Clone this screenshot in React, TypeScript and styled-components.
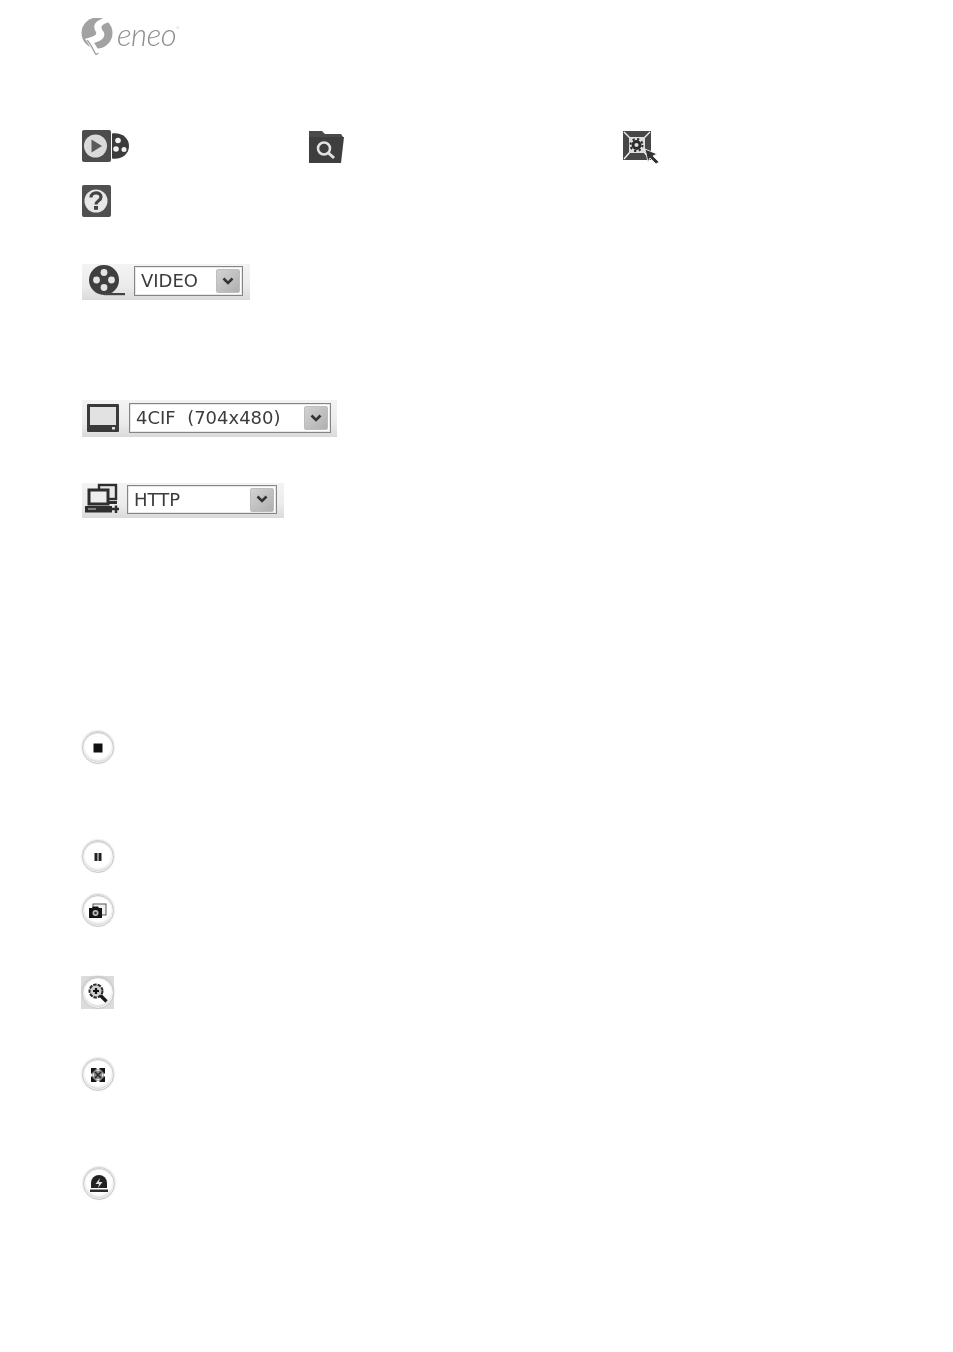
import React from "react";
import styled, { createGlobalStyle } from "styled-components";

const Global = createGlobalStyle`
  html, body { margin: 0; padding: 0; background: #fff; }
  body { font-family: "DejaVu Sans", sans-serif; }
`;

const Page = styled.div`
  width: 953px;
  height: 1352px;
  box-sizing: border-box;
  padding: 18px 0 0 81px;
  display: flex;
  flex-direction: column;
  overflow: hidden;
`;

const Logo = styled.div`
  display: flex;
  align-items: center;
  height: 38px;
  gap: 4px;
`;

const LogoWord = styled.span`
  font-family: "Lato", sans-serif;
  font-style: italic;
  font-weight: 300;
  font-size: 31px;
  line-height: 38px;
  letter-spacing: -0.4px;
  color: #8e8e8e;
  margin-top: -6px;
  filter: blur(0.3px);
`;

const Sup = styled.sup`
  font-size: 6px;
  line-height: 0;
  vertical-align: 15px;
`;

const TopRow = styled.div`
  display: grid;
  grid-template-columns: 228px 313px auto;
  margin-top: 74px;
  height: 34px;
  justify-content: start;
`;

const IconCell = styled.div`
  display: flex;
  align-items: flex-start;
`;

const HelpRow = styled.div`
  margin-top: 21px;
  height: 33px;
`;

const Bar = styled.div<{ $w: number; $h: number; $top: number; $gap: number; $pad: number }>`
  width: ${(p) => p.$w}px;
  height: ${(p) => p.$h}px;
  margin-top: ${(p) => p.$top}px;
  margin-left: 1px;
  box-sizing: border-box;
  padding-left: ${(p) => p.$pad}px;
  display: flex;
  align-items: flex-start;
  gap: ${(p) => p.$gap}px;
  background: linear-gradient(#f3f3f3 0%, #ececec 60%, #dadada 100%);
`;

const SelectBox = styled.div<{ $w: number; $h: number; $mt: number }>`
  width: ${(p) => p.$w}px;
  height: ${(p) => p.$h}px;
  margin-top: ${(p) => p.$mt}px;
  box-sizing: border-box;
  border: 1px solid #858585;
  box-shadow: inset 0 0 0 1px #e8e8e8;
  background: #fff;
  display: flex;
  align-items: center;
  justify-content: space-between;
  padding: 0 2px 0 6px;
  font-size: 18px;
  color: #3c3c3c;
  white-space: pre;
  filter: blur(0.45px);
`;

const SelectText = styled.span`
  margin-top: -1px;
`;

const Arrow = styled.div`
  width: 24px;
  height: 24px;
  background: linear-gradient(135deg, #d2d2d2, #b0b0b0);
  border: 1px solid #bdbdbd;
  box-sizing: border-box;
  border-radius: 2px;
  display: flex;
  align-items: center;
  justify-content: center;
`;

const RoundButton = styled.div<{ $top: number; $left?: number; $square?: boolean }>`
  width: 33px;
  height: 33px;
  margin-top: ${(p) => p.$top}px;
  margin-left: ${(p) => p.$left ?? 0}px;
  background: ${(p) => (p.$square ? "#dcdcdc" : "transparent")};
  display: flex;
  align-items: center;
  justify-content: center;
`;

const Ring = styled.div`
  width: 32px;
  height: 32px;
  box-sizing: border-box;
  border-radius: 50%;
  border: 1.500px solid #c8c8c8;
  box-shadow: 0 -1px 2px #c4c4c4, inset 0 0 0 1px #f4f4f4, inset 0 -2px 3px #cfcfcf;
  background: radial-gradient(circle at 50% 45%, #ffffff 60%, #e2e2e2 100%);
  display: flex;
  align-items: center;
  justify-content: center;
  filter: blur(0.35px);
`;

const Soft = styled.svg<{ $mt?: number }>`
  display: block;
  filter: blur(0.5px);
  flex: none;
  margin-top: ${(p) => p.$mt ?? 0}px;
`;

const Chevron = () => (
  <svg width="12" height="9" viewBox="0 0 12 9">
    <path d="M1.500 1.500 6 6l4.500-4.500" fill="none" stroke="#333" strokeWidth="2.600" />
  </svg>
);

const LogoMark = () => (
  <Soft width="32" height="38" viewBox="0 0 32 38">
    <circle cx="16" cy="15" r="15.500" fill="#a2a2a2" />
    <path d="M24 0 C12 3 12 9 15 14 C17 18 9 19 4 21 C8 26 11 33 14 38 L19 35 C16 30 15 27 13 25 C21 23 26 18 22 13 C19 9 20 6 29 4 Z" fill="#fff" />
    <path d="M6 22 C10 26 12 32 15 36.500 L17.500 35" fill="none" stroke="#a2a2a2" strokeWidth="1.300" />
  </Soft>
);

const PlayIcon = () => (
  <Soft width="49" height="33" viewBox="0 0 49 33">
    <rect x="1" y="0" width="29" height="32" rx="2" fill="#4c4c4c" />
    <circle cx="14.500" cy="16" r="11.500" fill="#dadada" />
    <path d="M10.500 9.500v13l10.500-6.500z" fill="#5a5a5a" />
    <path d="M31 3.500c9-1.500 17 4 17 12.500s-8 14-17 12.500z" fill="#3c3c3c" />
    <circle cx="37" cy="10.500" r="2.800" fill="#f2f2f2" />
    <circle cx="35" cy="19" r="2.800" fill="#f2f2f2" />
    <circle cx="43" cy="19.500" r="2.500" fill="#f2f2f2" />
  </Soft>
);

const FolderIcon = () => (
  <Soft width="36" height="33" viewBox="0 0 36 33">
    <path d="M0 1h13l3 3h16l2 3H0z" fill="#4a4a4a" />
    <path d="M0 7h35l-3 26H0z" fill="#3e3e3e" />
    <circle cx="15" cy="18.500" r="6" fill="none" stroke="#e2e2e2" strokeWidth="2.500" />
    <path d="M19.500 23l5.500 5" stroke="#e2e2e2" strokeWidth="3" />
  </Soft>
);

const SettingsIcon = () => (
  <Soft width="38" height="34" viewBox="0 0 38 34">
    <rect x="1" y="1" width="28" height="29" fill="#474747" />
    <path d="M2 2 8 8M28 2l-6 6M2 29l6-7M28 29l-6-7" stroke="#f0f0f0" strokeWidth="1.400" />
    <rect x="7" y="7" width="16" height="16" fill="#dedede" />
    <circle cx="14.500" cy="15" r="3.500" fill="none" stroke="#2a2a2a" strokeWidth="2.800" />
    <circle cx="14.500" cy="15" r="6" fill="none" stroke="#2a2a2a" strokeWidth="2" strokeDasharray="2.200 2.500" />
    <path d="M23 19l12 5-4 2 6 6-3 2-6-6-2 4z" fill="#333" stroke="#fff" strokeWidth=".8" />
  </Soft>
);

const HelpIcon = () => (
  <Soft width="31" height="33" viewBox="0 0 31 33">
    <rect x="1" y="0" width="29" height="32" rx="2" fill="#505050" />
    <circle cx="15" cy="16" r="11.500" fill="#e8e8e8" />
    <path d="M10 12.500c0-6 10-6 10-.5 0 4-5 3.500-5 7.500" fill="none" stroke="#444" strokeWidth="3.200" />
    <rect x="13" y="21" width="4" height="3.800" fill="#444" />
  </Soft>
);

const ReelIcon = () => (
  <Soft width="38" height="33" viewBox="0 0 38 33" $mt={1}>
    <circle cx="16" cy="15" r="15" fill="#3f3f3f" />
    <circle cx="16" cy="7.500" r="3.400" fill="#e4e4e4" />
    <circle cx="8.500" cy="15" r="3.400" fill="#e4e4e4" />
    <circle cx="23.500" cy="15" r="3.400" fill="#e4e4e4" />
    <circle cx="16" cy="22.500" r="3.400" fill="#e4e4e4" />
    <rect x="16" y="28" width="21" height="2.200" fill="#444" />
  </Soft>
);

const MonitorIcon = () => (
  <Soft width="32" height="28" viewBox="0 0 32 28" $mt={4}>
    <rect x="0" y="0" width="32" height="28" rx="1" fill="#3a3a3a" />
    <rect x="3" y="3" width="26" height="18" fill="#e2e2e2" />
    <rect x="25" y="23" width="3" height="2.500" fill="#ddd" />
  </Soft>
);

const NetworkIcon = () => (
  <Soft width="36" height="31" viewBox="0 0 36 31">
    <rect x="15" y="2" width="17" height="14" fill="#e8e8e8" stroke="#2e2e2e" strokeWidth="2.400" />
    <rect x="5" y="7" width="19" height="14" fill="#eeeeee" stroke="#2e2e2e" strokeWidth="3" />
    <path d="M24 18h9v3h-9z" fill="#2e2e2e" />
    <rect x="1" y="23" width="27" height="6.500" fill="#2e2e2e" />
    <path d="M4 26h8" stroke="#ccc" />
    <path d="M27 26h8M32 22.500v7.500" stroke="#2e2e2e" strokeWidth="2.400" />
  </Soft>
);

const StopGlyph = () => (
  <Soft width="10" height="10" viewBox="0 0 10 10"><rect width="9" height="9" x=".5" y=".5" fill="#111" /></Soft>
);
const PauseGlyph = () => (
  <Soft width="10" height="10" viewBox="0 0 10 10"><path d="M1.500 1h3v8h-3zM5.500 1h3v8h-3z" fill="#222" /></Soft>
);
const CameraGlyph = () => (
  <Soft width="20" height="16" viewBox="0 0 20 16">
    <rect x="5" y="1" width="13" height="11" fill="#f0f0f0" stroke="#555" />
    <path d="M1 5h3l1-1.500h5L11 5h3v10H1z" fill="#141414" />
    <circle cx="7.500" cy="10" r="3" fill="#bbb" />
    <circle cx="7.500" cy="10" r="1.300" fill="#333" />
  </Soft>
);
const ZoomGlyph = () => (
  <Soft width="20" height="20" viewBox="0 0 20 20">
    <circle cx="8" cy="8" r="6.500" fill="#cfcfcf" stroke="#2c2c2c" strokeWidth="2" strokeDasharray="3.500 1" />
    <path d="M5 8h6M8 5v6" stroke="#111" strokeWidth="2.200" />
    <path d="M12.500 12.500l6 6" stroke="#1c1c1c" strokeWidth="3.400" />
  </Soft>
);
const ExpandGlyph = () => (
  <Soft width="16" height="16" viewBox="0 0 16 16">
    <rect x="2" y="2" width="12" height="12" fill="#8a8a8a" />
    <path d="M1 1h6L1 7zM15 1H9l6 6zM1 15h6l-6-6zM15 15H9l6-6z" fill="#151515" />
    <path d="M5 5l6 6M11 5l-6 6" stroke="#2a2a2a" strokeWidth="1.600" />
    <path d="M8 2 6 4h4zM8 14l-2-2h4zM2 8l2-2v4zM14 8l-2-2v4z" fill="#e8e8e8" />
  </Soft>
);
const AlarmGlyph = () => (
  <Soft width="20" height="19" viewBox="0 0 20 19">
    <path d="M2 14V9a8 8 0 0 1 16 0v5z" fill="#222" />
    <path d="M11 4 6.500 10h3.500l-1 4 4.500-6H10z" fill="#e0e0e0" />
    <rect x="1" y="15.500" width="18" height="2.500" fill="#2c2c2c" />
  </Soft>
);

const Select = ({ w, h, mt, value }: { w: number; h: number; mt: number; value: string }) => (
  <SelectBox $w={w} $h={h} $mt={mt}>
    <SelectText>{value}</SelectText>
    <Arrow><Chevron /></Arrow>
  </SelectBox>
);

export default function App() {
  return (
    <Page>
      <Global />
      <Logo>
        <LogoMark />
        <LogoWord>eneo<Sup>°</Sup></LogoWord>
      </Logo>
      <TopRow>
        <IconCell><PlayIcon /></IconCell>
        <IconCell><FolderIcon /></IconCell>
        <IconCell><SettingsIcon /></IconCell>
      </TopRow>
      <HelpRow><HelpIcon /></HelpRow>
      <Bar $w={168} $h={36} $top={46} $gap={8} $pad={6}>
        <ReelIcon />
        <Select w={109} h={30} mt={2} value="VIDEO" />
      </Bar>
      <Bar $w={255} $h={37} $top={100} $gap={10} $pad={5}>
        <MonitorIcon />
        <Select w={202} h={30} mt={3} value="4CIF  (704x480)" />
      </Bar>
      <Bar $w={202} $h={35} $top={46} $gap={7} $pad={2}>
        <NetworkIcon />
        <Select w={150} h={29} mt={2} value="HTTP" />
      </Bar>
      <RoundButton $top={213}><Ring><StopGlyph /></Ring></RoundButton>
      <RoundButton $top={76}><Ring><PauseGlyph /></Ring></RoundButton>
      <RoundButton $top={21}><Ring><CameraGlyph /></Ring></RoundButton>
      <RoundButton $top={49} $square><Ring><ZoomGlyph /></Ring></RoundButton>
      <RoundButton $top={49}><Ring><ExpandGlyph /></Ring></RoundButton>
      <RoundButton $top={76} $left={1}><Ring><AlarmGlyph /></Ring></RoundButton>
    </Page>
  );
}
